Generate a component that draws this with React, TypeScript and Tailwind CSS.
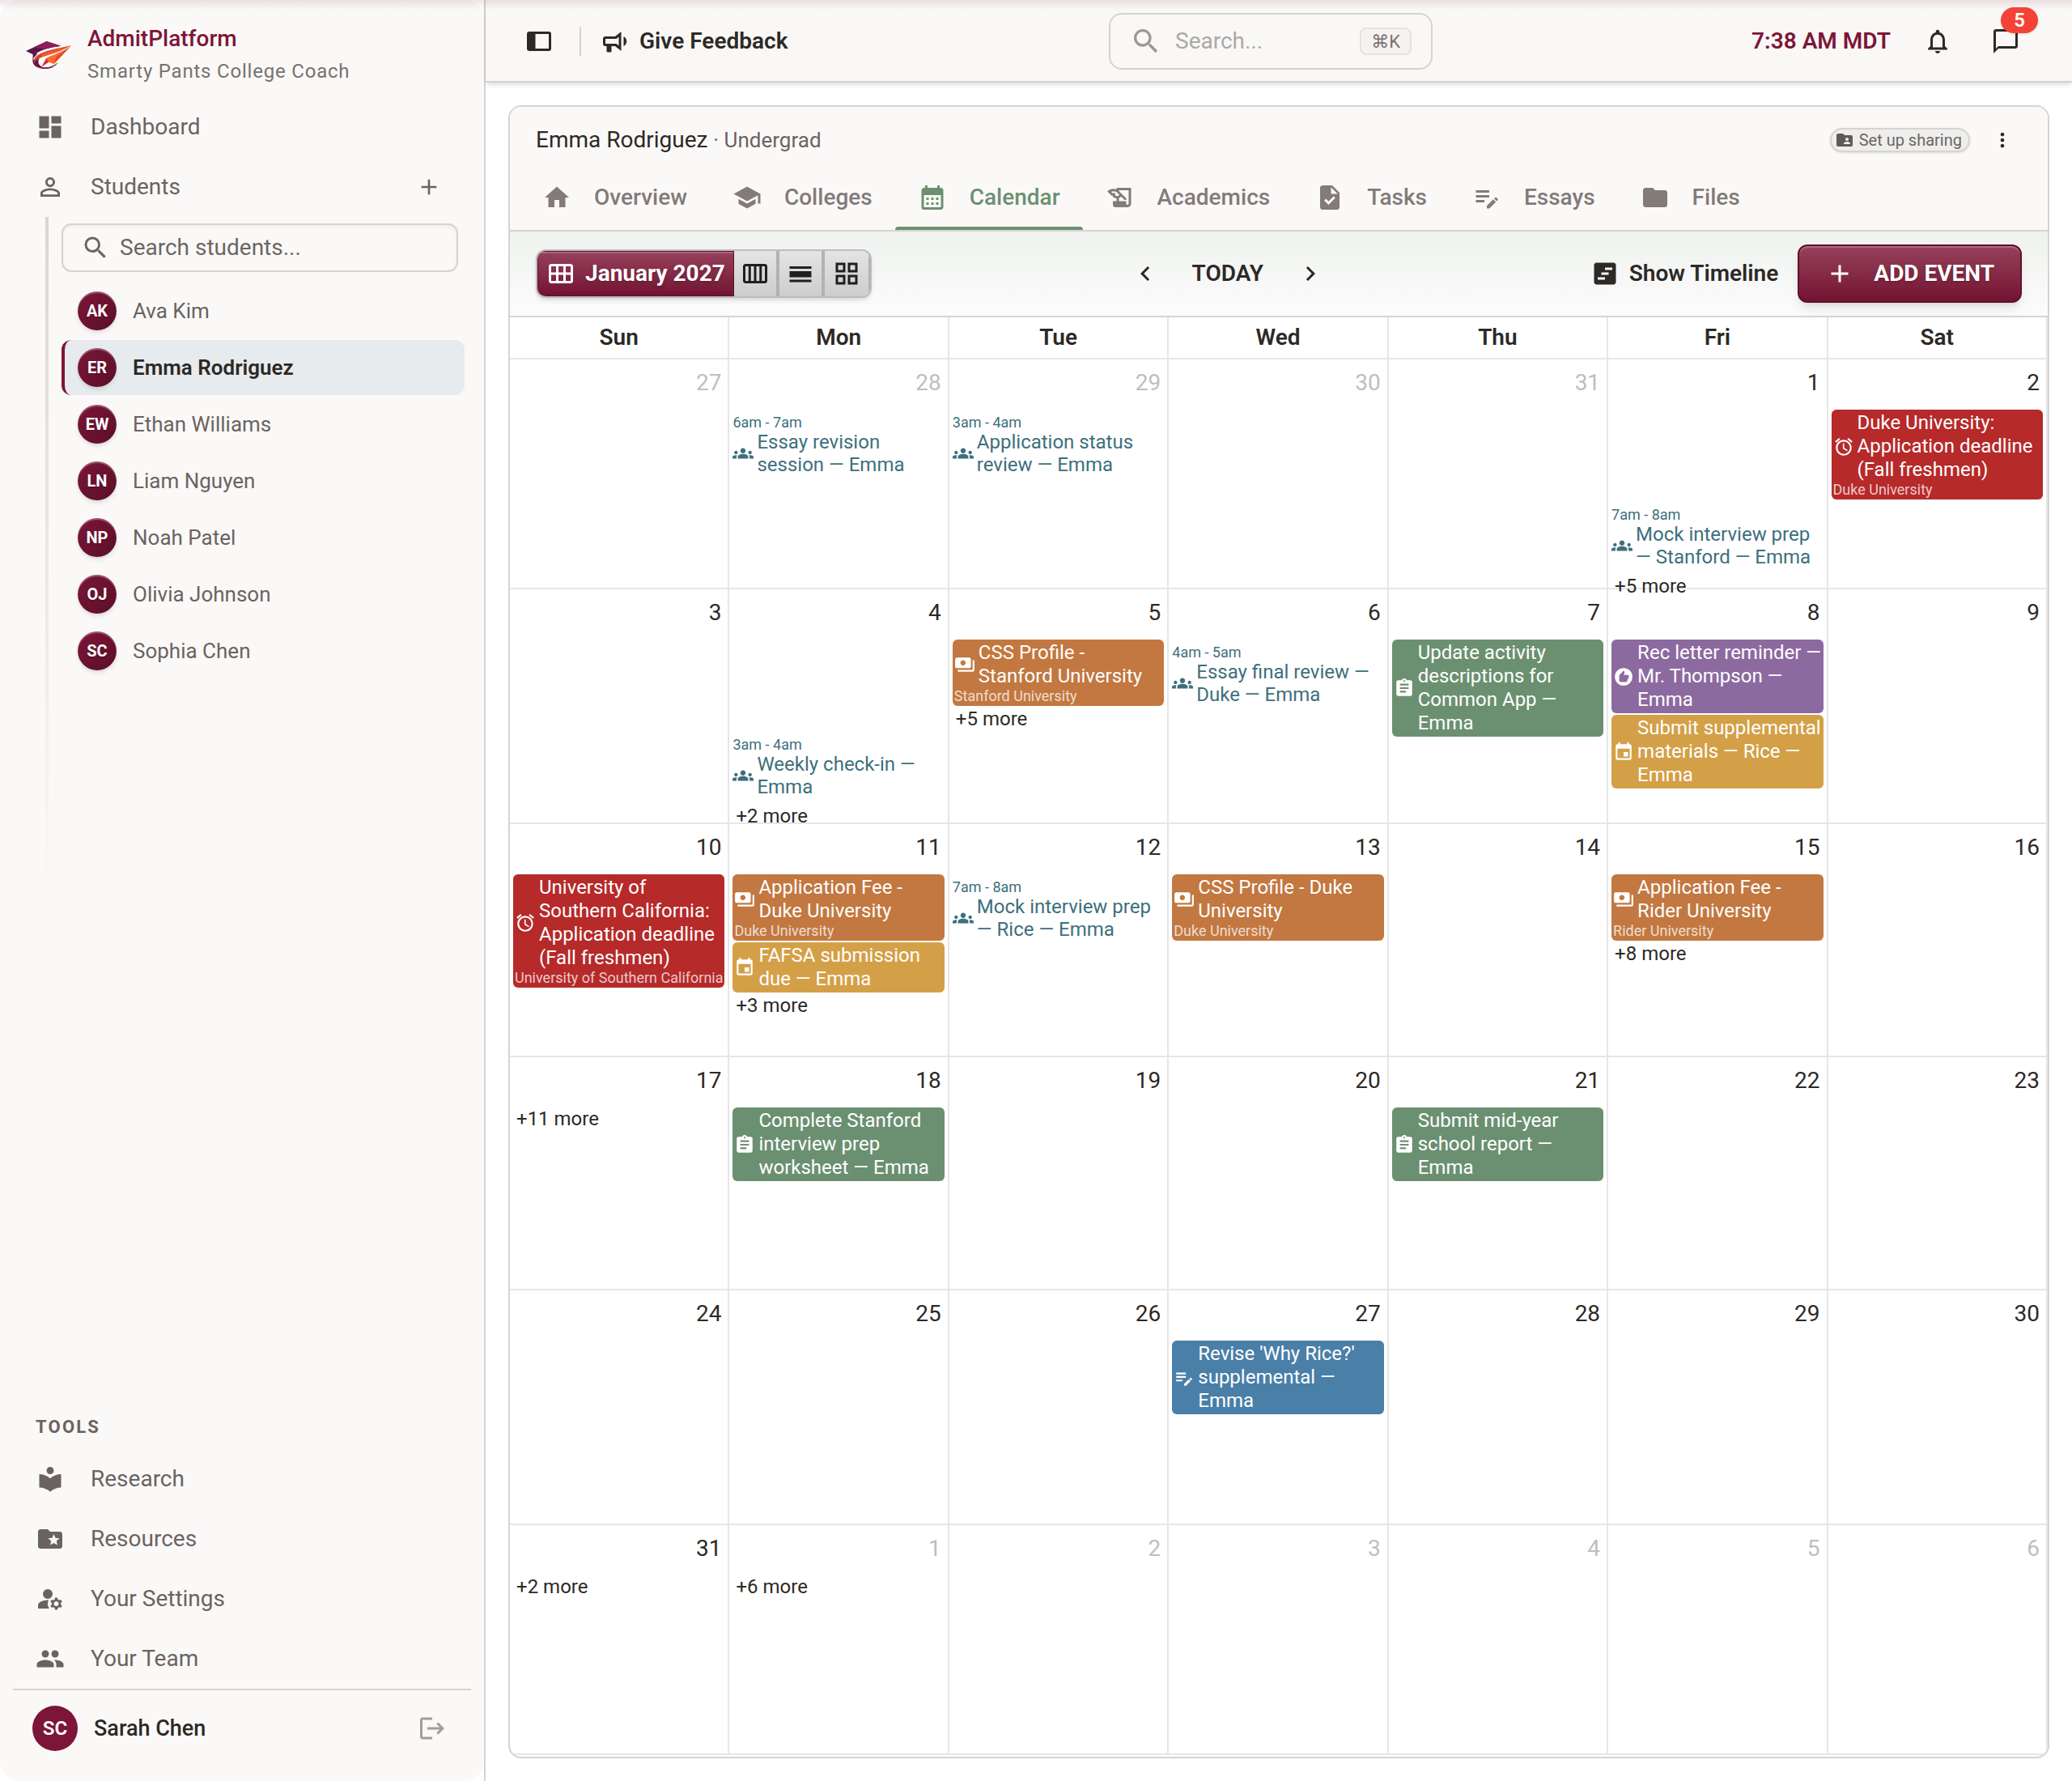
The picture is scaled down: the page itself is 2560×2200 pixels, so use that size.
import React, { useState } from 'react'
import {
    MdAdd,
    MdAlarm,
    MdAssignment,
    MdCalendarMonth,
    MdCalendarViewDay,
    MdCalendarViewMonth,
    MdCalendarViewWeek,
    MdChatBubbleOutline,
    MdChevronLeft,
    MdChevronRight,
    MdDashboard,
    MdEditNote,
    MdEvent,
    MdFolder,
    MdFolderShared,
    MdFolderSpecial,
    MdGridView,
    MdGroups,
    MdHistoryEdu,
    MdHome,
    MdLocalLibrary,
    MdLogout,
    MdManageAccounts,
    MdMoreVert,
    MdNotificationsNone,
    MdPayments,
    MdPeople,
    MdPersonOutline,
    MdRecommend,
    MdSchool,
    MdSearch,
    MdTask,
    MdViewTimeline,
} from 'react-icons/md'
import type { IconType } from 'react-icons'

type EventKind = 'deadline' | 'payment' | 'task' | 'rec' | 'event' | 'essay'

type CalendarEvent =
    | { type: 'card'; kind: EventKind; title: string; school?: string }
    | { type: 'meeting'; time: string; title: string }
    | { type: 'spacer' }

type Day = {
    date: number
    outside?: boolean
    events?: CalendarEvent[]
    more?: number
}

const kinds: Record<EventKind, { icon: IconType; color: string }> = {
    deadline: { icon: MdAlarm, color: 'bg-[#b62a2a]' },
    payment: { icon: MdPayments, color: 'bg-[#c27840]' },
    task: { icon: MdAssignment, color: 'bg-[#6b9071]' },
    rec: { icon: MdRecommend, color: 'bg-[#8c6aa0]' },
    event: { icon: MdEvent, color: 'bg-[#d4a047]' },
    essay: { icon: MdEditNote, color: 'bg-[#4a7fa8]' },
}

const weekdays = ['Sun', 'Mon', 'Tue', 'Wed', 'Thu', 'Fri', 'Sat']

const weeks: { height: string; days: Day[] }[] = [
    {
        height: 'h-[282px]',
        days: [
            { date: 27, outside: true },
            { date: 28, outside: true, events: [{ type: 'meeting', time: '6am - 7am', title: 'Essay revision session — Emma' }] },
            { date: 29, outside: true, events: [{ type: 'meeting', time: '3am - 4am', title: 'Application status review — Emma' }] },
            { date: 30, outside: true },
            { date: 31, outside: true },
            {
                date: 1,
                events: [{ type: 'spacer' }, { type: 'meeting', time: '7am - 8am', title: 'Mock interview prep — Stanford — Emma' }],
                more: 5,
            },
            {
                date: 2,
                events: [{ type: 'card', kind: 'deadline', title: 'Duke University: Application deadline (Fall freshmen)', school: 'Duke University' }],
            },
        ],
    },
    {
        height: 'h-[288px]',
        days: [
            { date: 3 },
            { date: 4, events: [{ type: 'spacer' }, { type: 'meeting', time: '3am - 4am', title: 'Weekly check-in — Emma' }], more: 2 },
            { date: 5, events: [{ type: 'card', kind: 'payment', title: 'CSS Profile - Stanford University', school: 'Stanford University' }], more: 5 },
            { date: 6, events: [{ type: 'meeting', time: '4am - 5am', title: 'Essay final review — Duke — Emma' }] },
            { date: 7, events: [{ type: 'card', kind: 'task', title: 'Update activity descriptions for Common App — Emma' }] },
            {
                date: 8,
                events: [
                    { type: 'card', kind: 'rec', title: 'Rec letter reminder — Mr. Thompson — Emma' },
                    { type: 'card', kind: 'event', title: 'Submit supplemental materials — Rice — Emma' },
                ],
            },
            { date: 9 },
        ],
    },
    {
        height: 'h-[286px]',
        days: [
            {
                date: 10,
                events: [
                    {
                        type: 'card',
                        kind: 'deadline',
                        title: 'University of Southern California: Application deadline (Fall freshmen)',
                        school: 'University of Southern California',
                    },
                ],
            },
            {
                date: 11,
                events: [
                    { type: 'card', kind: 'payment', title: 'Application Fee - Duke University', school: 'Duke University' },
                    { type: 'card', kind: 'event', title: 'FAFSA submission due — Emma' },
                ],
                more: 3,
            },
            { date: 12, events: [{ type: 'meeting', time: '7am - 8am', title: 'Mock interview prep — Rice — Emma' }] },
            { date: 13, events: [{ type: 'card', kind: 'payment', title: 'CSS Profile - Duke University', school: 'Duke University' }] },
            { date: 14 },
            { date: 15, events: [{ type: 'card', kind: 'payment', title: 'Application Fee - Rider University', school: 'Rider University' }], more: 8 },
            { date: 16 },
        ],
    },
    {
        height: 'h-[286px]',
        days: [
            { date: 17, more: 11 },
            { date: 18, events: [{ type: 'card', kind: 'task', title: 'Complete Stanford interview prep worksheet — Emma' }] },
            { date: 19 },
            { date: 20 },
            { date: 21, events: [{ type: 'card', kind: 'task', title: 'Submit mid-year school report — Emma' }] },
            { date: 22 },
            { date: 23 },
        ],
    },
    {
        height: 'h-[288px]',
        days: [
            { date: 24 },
            { date: 25 },
            { date: 26 },
            { date: 27, events: [{ type: 'card', kind: 'essay', title: "Revise 'Why Rice?' supplemental — Emma" }] },
            { date: 28 },
            { date: 29 },
            { date: 30 },
        ],
    },
    {
        height: 'h-[282px]',
        days: [
            { date: 31, more: 2 },
            { date: 1, outside: true, more: 6 },
            { date: 2, outside: true },
            { date: 3, outside: true },
            { date: 4, outside: true },
            { date: 5, outside: true },
            { date: 6, outside: true },
        ],
    },
]

const students = [
    { initials: 'AK', name: 'Ava Kim' },
    { initials: 'ER', name: 'Emma Rodriguez' },
    { initials: 'EW', name: 'Ethan Williams' },
    { initials: 'LN', name: 'Liam Nguyen' },
    { initials: 'NP', name: 'Noah Patel' },
    { initials: 'OJ', name: 'Olivia Johnson' },
    { initials: 'SC', name: 'Sophia Chen' },
]

const tools: { label: string; icon: IconType }[] = [
    { label: 'Research', icon: MdLocalLibrary },
    { label: 'Resources', icon: MdFolderSpecial },
    { label: 'Your Settings', icon: MdManageAccounts },
    { label: 'Your Team', icon: MdPeople },
]

const tabs: { label: string; icon: IconType }[] = [
    { label: 'Overview', icon: MdHome },
    { label: 'Colleges', icon: MdSchool },
    { label: 'Calendar', icon: MdCalendarMonth },
    { label: 'Academics', icon: MdHistoryEdu },
    { label: 'Tasks', icon: MdTask },
    { label: 'Essays', icon: MdEditNote },
    { label: 'Files', icon: MdFolder },
]

function Logo() {
    return (
        <svg viewBox="0 0 168 102" className="w-14 shrink-0" aria-hidden="true">
            <path d="M0 36 L77 0 L130 17 C92 22 56 30 30 50 Z" fill="#58154a" />
            <path d="M30 22 L77 0 L130 17 C112 20 100 21 90 25 C68 30 48 28 30 22 Z" fill="#8c1f5a" />
            <path d="M26 48 L44 44 C36 56 27 58 25 74 Z" fill="#58154a" />
            <path d="M25 70 C24 92 46 103 76 102 C96 101 112 90 119 78 C105 91 88 97 72 97 C50 95 40 80 50 62 C36 62 28 66 25 70 Z" fill="#6a1746" />
            <path d="M168 15 C128 26 66 32 38 56 C31 63 29 72 31 80 C38 66 58 57 84 50 C114 42 142 30 168 15 Z" fill="#d8402f" />
            <path d="M60 46 C90 34 130 28 168 15 C142 30 114 42 84 50 C74 53 64 56 56 59 Z" fill="#ee5a30" />
            <path d="M166 18 C134 42 98 50 76 62 L59 94 L84 77 L104 84 Z" fill="#ff6a2c" />
            <path d="M166 18 L104 84 L112 58 Z" fill="#e04a2c" />
            <path d="M76 62 L59 94 L84 77 L80 70 Z" fill="#c93636" />
        </svg>
    )
}

function DockLeftIcon() {
    return (
        <svg viewBox="0 0 24 24" className="size-9" fill="currentColor" aria-hidden="true">
            <path d="M20 4H4A2 2 0 0 0 2 6V18A2 2 0 0 0 4 20H20A2 2 0 0 0 22 18V6A2 2 0 0 0 20 4M20 18H9V6H20V18Z" />
        </svg>
    )
}

function BullhornIcon() {
    return (
        <svg viewBox="0 0 24 24" className="size-9" fill="currentColor" aria-hidden="true">
            <path d="M12,8H4A2,2 0 0,0 2,10V14A2,2 0 0,0 4,16H5V20A1,1 0 0,0 6,21H8A1,1 0 0,0 9,20V16H12L17,20V4L12,8M15,15.6L13,14H4V10H13L15,8.4V15.6M21.5,12C21.5,13.71 20.54,15.26 19,16V8C20.53,8.75 21.5,10.3 21.5,12Z" />
        </svg>
    )
}

function NavItem({ label, icon: Icon }: { label: string; icon: IconType }) {
    return (
        <a href="#" className="flex h-[74px] items-center gap-8 pl-11 text-[28px] text-[#6b6361]">
            <Icon className="size-9" />
            {label}
        </a>
    )
}

function Sidebar() {
    const [selected, setSelected] = useState('ER')

    return (
        <aside className="flex w-[600px] shrink-0 border-r-2 border-[#d8d3cf] bg-white">
            <div className="flex flex-1 flex-col rounded-3xl bg-[#faf9f7] pb-[18px]">
                <div className="flex h-[120px] items-center gap-5 pt-4 pl-8">
                    <Logo />
                    <div>
                        <p className="text-[28px] leading-10 font-medium text-[#7d1538]">AdmitPlatform</p>
                        <p className="text-2xl leading-10 tracking-[0.033em] text-[#77726f]">Smarty Pants College Coach</p>
                    </div>
                </div>

                <nav className="flex flex-1 flex-col">
                    <NavItem label="Dashboard" icon={MdDashboard} />
                    <div className="flex items-center justify-between pr-[52px]">
                        <NavItem label="Students" icon={MdPersonOutline} />
                        <button type="button" aria-label="Add student" className="text-[#6b6361]">
                            <MdAdd className="size-8" />
                        </button>
                    </div>

                    <div className="flex gap-4 pr-6 pl-14">
                        <div className="h-[840px] w-1 shrink-0 bg-linear-to-b from-[#ddd6cf] to-transparent"></div>
                        <div className="flex-1 pt-2">
                            <label className="mr-2 flex h-[60px] items-center gap-3 rounded-xl border-2 border-[#d9d2cc] px-[22px] text-[#6b6663] inset-shadow-sm">
                                <MdSearch className="size-9 shrink-0" />
                                <input
                                    type="text"
                                    aria-label="Search students"
                                    placeholder="Search students..."
                                    className="w-full text-[28px] outline-none placeholder:text-[#6b6663]"
                                />
                            </label>
                            <ul className="flex flex-col gap-0.5 pt-3.5">
                                {students.map((s) => (
                                    <li key={s.initials}>
                                        <button
                                            type="button"
                                            onClick={() => setSelected(s.initials)}
                                            className={`flex h-[68px] w-full items-center gap-5 rounded-xl border-l-4 pl-4 text-[26px] ${
                                                selected === s.initials
                                                    ? 'border-[#7d1538] bg-[#e7ebee] font-semibold text-[#2d2926]'
                                                    : 'border-transparent text-[#6b6361]'
                                            }`}
                                        >
                                            <span className="flex size-12 items-center justify-center rounded-full bg-linear-to-br from-[#7d1538] to-[#5a0f28] text-xl font-bold text-white shadow-md inset-shadow-[0_2px_1px_rgba(255,255,255,0.3)] text-shadow-sm">
                                                {s.initials}
                                            </span>
                                            {s.name}
                                        </button>
                                    </li>
                                ))}
                            </ul>
                        </div>
                    </div>
                </nav>

                <h2 className="pb-2.5 pl-11 text-[22px] leading-[34px] font-bold tracking-widest text-[#6b6361]">TOOLS</h2>
                <nav>
                    {tools.map((t) => (
                        <NavItem key={t.label} label={t.label} icon={t.icon} />
                    ))}
                </nav>
                <div className="mx-4 flex h-24 items-center border-t-2 border-[#d9d3ce] pr-[30px] pl-6">
                    <span className="flex size-14 items-center justify-center rounded-full bg-[#7d1538] text-2xl font-semibold text-white">SC</span>
                    <span className="flex-1 pl-5 text-[27px] font-medium text-[#2d2926]">Sarah Chen</span>
                    <button type="button" aria-label="Log out" className="text-[#a39d9a]">
                        <MdLogout className="size-9" />
                    </button>
                </div>
            </div>
        </aside>
    )
}

function TopBar() {
    return (
        <header className="grid h-[102px] grid-cols-[1fr_400px_1fr] items-center border-b-2 border-[#d8d3cf] bg-[#f9f8f6] pt-0.5 pr-16 pl-11 text-[28px] text-[#2d2926] shadow-md">
            <div className="flex items-center pl-1">
                <button type="button" aria-label="Toggle sidebar">
                    <DockLeftIcon />
                </button>
                <div className="mr-6 ml-8 h-9 w-0.5 bg-[#d5d2cf]"></div>
                <button type="button" className="flex items-center gap-3 font-semibold">
                    <BullhornIcon />
                    Give Feedback
                </button>
            </div>
            <label className="flex h-[70px] items-center rounded-2xl border-2 border-[#d5d3d0] px-6 text-[#9b9896]">
                <MdSearch className="size-10 shrink-0" />
                <input type="text" aria-label="Search" placeholder="Search..." className="w-full min-w-0 pl-4 outline-none placeholder:text-[#aba9a7]" />
                <kbd className="flex h-[34px] shrink-0 items-center rounded-lg border-2 border-[#e6e2de] bg-[#f6f2ef] px-3 font-['Roboto','DejaVu_Sans',sans-serif] text-[22px] text-[#77726f]">⌘K</kbd>
            </label>
            <div className="flex items-center justify-end">
                <span className="font-semibold text-[#7d1538]">7:38 AM MDT</span>
                <button type="button" aria-label="Notifications" className="ml-10">
                    <MdNotificationsNone className="size-9" />
                </button>
                <button type="button" aria-label="Messages" className="relative ml-12">
                    <MdChatBubbleOutline className="size-9" />
                    <span className="absolute -top-6 left-3 flex h-8 w-[46px] items-center justify-center rounded-full bg-[#f44336] text-2xl font-semibold text-white shadow-sm">
                        5
                    </span>
                </button>
            </div>
        </header>
    )
}

function StudentHeader() {
    const [active, setActive] = useState('Calendar')

    return (
        <div className="border-b-2 border-[#d9d3cf] bg-[#fbf9f8]">
            <div className="flex h-[78px] items-center pt-1 pr-[42px] pl-8">
                <h1 className="flex-1 text-[28px] text-[#2d2926]">
                    Emma Rodriguez <span className="text-[26px] text-[#6b6361]">· Undergrad</span>
                </h1>
                <button
                    type="button"
                    className="flex h-[30px] items-center gap-1.5 rounded-full border-2 border-[#d9d3cf] bg-[#eeeeed] pr-2 pl-1 text-xl text-[#6b6663] shadow-sm"
                >
                    <MdFolderShared className="size-6 text-[#5f5a58]" />
                    Set up sharing
                </button>
                <button type="button" aria-label="More options" className="ml-[26px] text-[#2d2926]">
                    <MdMoreVert className="size-7" />
                </button>
            </div>
            <div role="tablist" className="flex pl-3">
                {tabs.map(({ label, icon: Icon }) => (
                    <button
                        key={label}
                        type="button"
                        role="tab"
                        aria-selected={active === label}
                        onClick={() => setActive(label)}
                        className={`flex h-[74px] flex-col justify-between text-[28px] font-medium ${active === label ? 'text-[#6b9071]' : 'text-[#827b78]'}`}
                    >
                        <span className="flex h-[68px] items-center gap-7 px-7">
                            <Icon className="size-9" />
                            {label}
                        </span>
                        <span className={`h-1 w-full rounded-t-sm ${active === label ? 'bg-[#6b9071]' : ''}`}></span>
                    </button>
                ))}
            </div>
        </div>
    )
}

function CalendarToolbar() {
    const views: { label: string; icon: IconType }[] = [
        { label: 'Week', icon: MdCalendarViewWeek },
        { label: 'Day', icon: MdCalendarViewDay },
        { label: 'Year', icon: MdGridView },
    ]

    return (
        <div className="flex h-[106px] items-center justify-between border-b-2 border-[#d9d3cf] bg-linear-to-b from-[#eff2ef] to-[#fcfcfc] px-8 text-[28px] font-semibold text-[#2d2926]">
            <div className="flex h-[60px] overflow-hidden rounded-xl border-2 border-[#bcbebe] shadow-md">
                <button
                    type="button"
                    className="flex items-center gap-3 border border-[#5f1029] bg-linear-to-b from-[#96405c] to-[#731232] px-2.5 font-bold text-white inset-shadow-[0_2px_0_rgba(255,255,255,0.2)] text-shadow-md"
                >
                    <MdCalendarViewMonth className="size-9" />
                    January 2027
                </button>
                {views.map(({ label, icon: Icon }) => (
                    <button
                        key={label}
                        type="button"
                        aria-label={label}
                        className="flex w-14 items-center justify-center border-r-4 border-[#b0b2b3] bg-linear-to-b from-[#e4e4e4] to-[#cdcdcd] text-[#1f1f1f] last:border-r-2"
                    >
                        <Icon className="size-9" />
                    </button>
                ))}
            </div>
            <div className="flex items-center gap-10">
                <button type="button" aria-label="Previous month">
                    <MdChevronLeft className="size-9" />
                </button>
                <button type="button">TODAY</button>
                <button type="button" aria-label="Next month">
                    <MdChevronRight className="size-9" />
                </button>
            </div>
            <div className="flex items-center gap-4">
                <button type="button" className="flex items-center gap-3 px-2">
                    <MdViewTimeline className="size-9" />
                    Show Timeline
                </button>
                <button
                    type="button"
                    className="flex h-[72px] items-center gap-6 rounded-xl border-2 border-[#5f1029] bg-linear-to-b from-[#96405c] to-[#731232] px-8 font-bold text-white shadow-lg inset-shadow-[0_2px_1px_rgba(255,255,255,0.25)] text-shadow-md"
                >
                    <MdAdd className="size-9" />
                    ADD EVENT
                </button>
            </div>
        </div>
    )
}

function EventItem({ event }: { event: CalendarEvent }) {
    if (event.type === 'spacer') {
        return <div className="h-28"></div>
    }
    if (event.type === 'meeting') {
        return (
            <div className="py-1.5 text-[#3d6f7d]">
                <p className="text-lg leading-5">{event.time}</p>
                <div className="flex items-center gap-1">
                    <MdGroups className="size-[26px] shrink-0" />
                    <p className="text-2xl leading-7">{event.title}</p>
                </div>
            </div>
        )
    }
    const { icon: Icon, color } = kinds[event.kind]
    return (
        <div className={`rounded-md p-0.5 text-white ${color}`}>
            <div className="flex items-center gap-1">
                <Icon className="size-[26px] shrink-0" />
                <p className="text-2xl leading-[29px]">{event.title}</p>
            </div>
            {event.school && <p className="text-lg leading-5 whitespace-nowrap text-white/75">{event.school}</p>}
        </div>
    )
}

function Calendar() {
    return (
        <table className="w-full table-fixed border-separate border-spacing-0 text-[#2d2926]">
            <thead>
                <tr>
                    {weekdays.map((d) => (
                        <th key={d} scope="col" className="h-[52px] border-r-2 border-b-2 border-[#e6e6e6] p-0 text-[28px] leading-none font-semibold">
                            {d}
                        </th>
                    ))}
                </tr>
            </thead>
            <tbody>
                {weeks.map((week, i) => (
                    <tr key={i}>
                        {week.days.map((day) => (
                            <td key={day.date} className="border-r-2 border-b-2 border-[#e6e6e6] p-0 align-top">
                                <div className={`px-1 ${week.height}`}>
                                    <p className={`h-[62px] pt-2 pr-1 text-right text-[28px] leading-[42px] ${day.outside ? 'text-[#c0bebd]' : ''}`}>{day.date}</p>
                                    <div className="flex flex-col gap-0.5">
                                        {day.events?.map((e, n) => (
                                            <EventItem key={n} event={e} />
                                        ))}
                                        {day.more && (
                                            <button type="button" className="pl-1 text-left text-2xl leading-7">
                                                +{day.more} more
                                            </button>
                                        )}
                                    </div>
                                </div>
                            </td>
                        ))}
                    </tr>
                ))}
            </tbody>
        </table>
    )
}

export default function App() {
    return (
        <div className="relative flex min-h-screen bg-white font-['Roboto',sans-serif]">
            <Sidebar />
            <div className="flex min-w-0 flex-1 flex-col">
                <TopBar />
                <main className="flex flex-1 flex-col p-7">
                    <section className="flex-1 overflow-hidden rounded-2xl border-2 border-[#d9d3cf] bg-white">
                        <StudentHeader />
                        <CalendarToolbar />
                        <Calendar />
                    </section>
                </main>
            </div>
            <div className="pointer-events-none absolute inset-x-0 top-0 h-3 bg-linear-to-b from-[#7d1538]/12 to-transparent"></div>
        </div>
    )
}
